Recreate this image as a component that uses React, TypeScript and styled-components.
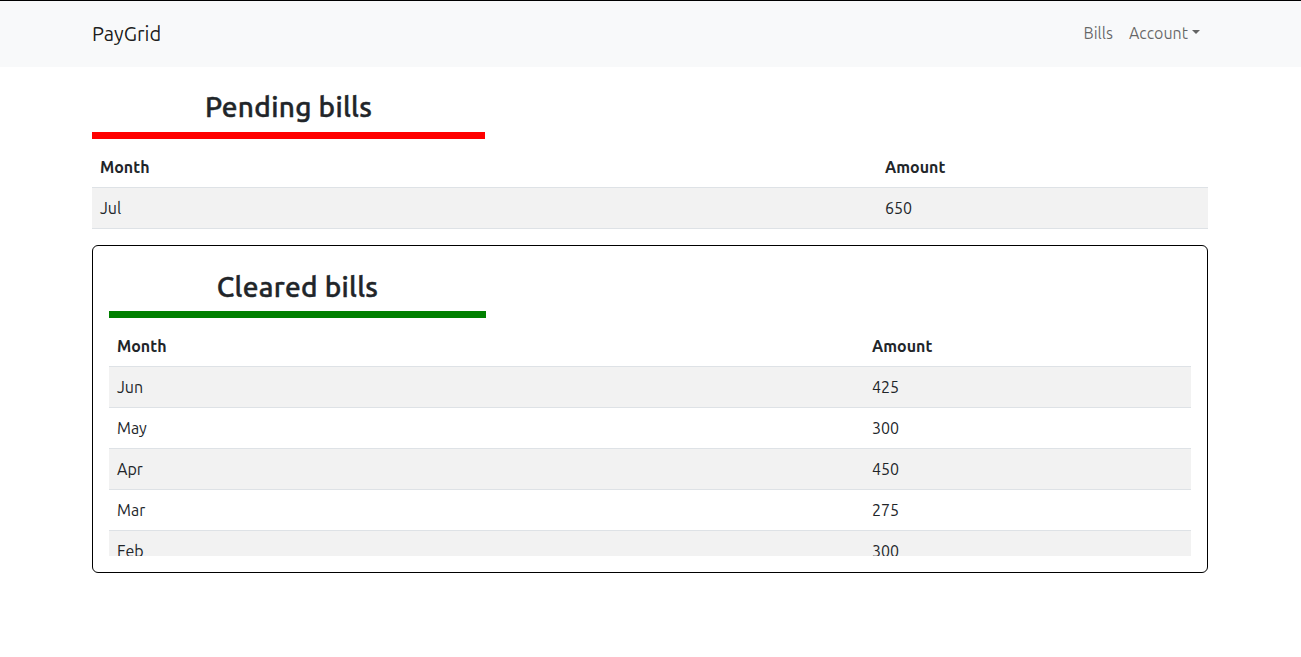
import React from "react";
import styled, { createGlobalStyle } from "styled-components";

const GlobalStyle = createGlobalStyle`
  * { box-sizing: border-box; }
  html, body { margin: 0; padding: 0; background: #fff; }
  body {
    font-family: Ubuntu, "Open Sans", "Noto Sans", sans-serif;
    font-size: 16px;
    line-height: 1.5;
    color: #212529;
    border-top: 1px solid #000;
  }
`;

const NavBar = styled.nav`
  background: #f8f9fa;
  height: 66px;
  display: flex;
  align-items: center;
`;

const Container = styled.div`
  width: 1140px;
  margin-left: calc(50% - 570.5px);
  padding: 0 12px;
`;

const NavInner = styled(Container)`
  display: flex;
  align-items: center;
  justify-content: space-between;
`;

const Brand = styled.a`
  font-size: 20px;
  line-height: 30px;
  color: rgba(0, 0, 0, 0.9);
  text-decoration: none;
`;

const NavLinks = styled.div`
  display: flex;
  align-items: center;
  margin-bottom: 2px;
`;

const NavLink = styled.a`
  padding: 8px;
  color: rgba(0, 0, 0, 0.6);
  font-size: 16px;
  line-height: 24px;
  text-decoration: none;
  display: inline-flex;
  align-items: center;
`;

const Caret = styled.span`
  display: inline-block;
  margin-left: 4px;
  width: 0;
  height: 0;
  border-top: 4.8px solid currentColor;
  border-left: 4.8px solid transparent;
  border-right: 4.8px solid transparent;
  position: relative;
  top: -1px;
`;

const Main = styled(Container)`
  margin-top: 16px;
`;

const Heading = styled.h3<{ $width: number; $color: string }>`
  width: ${(p) => p.$width}px;
  margin: 0 0 8px;
  padding: 7px 0 8px;
  font-size: 28px;
  line-height: 33.6px;
  font-weight: 500;
  letter-spacing: 0.3px;
  -webkit-text-stroke: 0.45px #212529;
  text-align: center;
  color: #212529;
  border-bottom: 7px solid ${(p) => p.$color};
`;

const Table = styled.table`
  width: 100%;
  border-collapse: collapse;
  table-layout: fixed;
`;

const Th = styled.th<{ $width?: number }>`
  text-align: left;
  font-weight: 700;
  padding: 8px;
  line-height: 24px;
  border-bottom: 1px solid #dee2e6;
  ${(p) => (p.$width ? `width: ${p.$width}px;` : "")}
`;

const Row = styled.tr<{ $striped: boolean }>`
  background: ${(p) => (p.$striped ? "#f2f2f2" : "#fff")};
`;

const Td = styled.td`
  padding: 8px;
  line-height: 24px;
  border-bottom: 1px solid #dee2e6;
`;

const Card = styled.div`
  margin-top: 16px;
  border: 1px solid #000;
  border-radius: 6px;
  padding: 17px 16px 16px;
`;

const Scroll = styled.div`
  height: 230px;
  overflow: hidden;
`;

type Bill = { month: string; amount: number };

const pending: Bill[] = [{ month: "Jul", amount: 650 }];
const cleared: Bill[] = [
  { month: "Jun", amount: 425 },
  { month: "May", amount: 300 },
  { month: "Apr", amount: 450 },
  { month: "Mar", amount: 275 },
  { month: "Feb", amount: 300 },
  { month: "Jan", amount: 350 },
];

function BillTable({ bills, monthWidth }: { bills: Bill[]; monthWidth: number }) {
  return (
    <Table>
      <thead>
        <tr>
          <Th $width={monthWidth}>Month</Th>
          <Th>Amount</Th>
        </tr>
      </thead>
      <tbody>
        {bills.map((b, i) => (
          <Row key={b.month} $striped={i % 2 === 0}>
            <Td>{b.month}</Td>
            <Td>{b.amount}</Td>
          </Row>
        ))}
      </tbody>
    </Table>
  );
}

export default function App() {
  return (
    <>
      <GlobalStyle />
      <NavBar>
        <NavInner>
          <Brand href="#">PayGrid</Brand>
          <NavLinks>
            <NavLink href="#">Bills</NavLink>
            <NavLink href="#">
              Account
              <Caret />
            </NavLink>
          </NavLinks>
        </NavInner>
      </NavBar>
      <Main>
        <Heading $width={393} $color="#ff0000">Pending bills</Heading>
        <BillTable bills={pending} monthWidth={785} />
        <Card>
          <Heading $width={377} $color="#008000">Cleared bills</Heading>
          <Scroll>
            <BillTable bills={cleared} monthWidth={755} />
          </Scroll>
        </Card>
      </Main>
    </>
  );
}
